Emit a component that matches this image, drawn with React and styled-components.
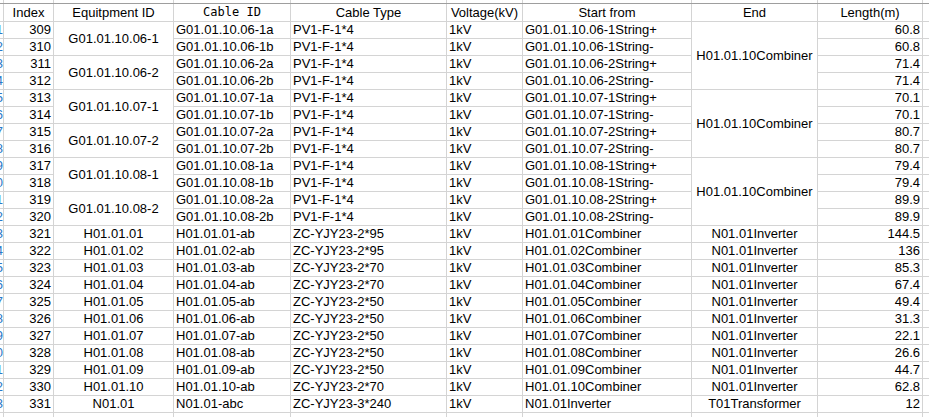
import React from 'react';
import styled, { createGlobalStyle } from 'styled-components';

const GlobalStyle = createGlobalStyle`
  html, body {
    margin: 0;
    padding: 0;
    background: #ffffff;
    overflow: hidden;
  }
  body {
    font-family: "Liberation Sans", Arial, sans-serif;
  }
`;

const columns = '3px 49px 119px 116px 155px 75px 168px 125px 104px 1fr';

const colors = {
  line: '#d4d4d4',
  frozen: '#9e9e9e',
  text: '#000000',
  rowNumber: '#2a78c8'
};

const Page = styled.div`
  width: 929px;
  height: 417px;
  overflow: hidden;
  background: #ffffff;
`;

const TopStrip = styled.div`
  display: grid;
  grid-template-columns: ${ columns };
  grid-template-rows: 3px;
  column-gap: 1px;
  background: ${ colors.line };
`;

const Divider = styled.div`
  height: 1px;
  background: ${ colors.frozen };
`;

const Sheet = styled.div`
  display: grid;
  grid-template-columns: ${ columns };
  grid-template-rows: 17px;
  grid-auto-rows: 16px;
  gap: 1px;
  background: ${ colors.line };
`;

const Blank = styled.div`
  background: #ffffff;
`;

const RowNumber = styled.div`
  display: flex;
  justify-content: flex-end;
  align-items: center;
  overflow: hidden;
  background: #ffffff;
  color: ${ colors.rowNumber };
  font-size: 13px;
  line-height: 16px;
  white-space: nowrap;
`;

const HeaderCell = styled.div`
  display: flex;
  align-items: center;
  justify-content: center;
  background: #ffffff;
  color: ${ colors.text };
  font-family: ${ props => props.$mono ? '"DejaVu Sans Mono", "Liberation Mono", monospace' : '"Liberation Sans", Arial, sans-serif' };
  font-size: ${ props => props.$mono ? '12px' : '13px' };
  line-height: 17px;
  white-space: nowrap;
  overflow: hidden;
`;

const justify = { left: 'flex-start', center: 'center', right: 'flex-end' };

const Cell = styled.div`
  display: flex;
  align-items: center;
  justify-content: ${ props => justify[ props.$align || 'left' ] };
  grid-row: ${ props => props.$span ? `span ${ props.$span }` : 'auto' };
  padding: 0 2px;
  background: #ffffff;
  color: ${ colors.text };
  font-size: 13px;
  line-height: 16px;
  white-space: nowrap;
  overflow: hidden;
`;

const headers = [
  { label: 'Index' },
  { label: 'Equitpment ID' },
  { label: 'Cable ID', mono: true },
  { label: 'Cable Type' },
  { label: 'Voltage(kV)' },
  { label: 'Start from' },
  { label: 'End' },
  { label: 'Length(m)' }
];

const stringRows = [
  [ '06', '1', 60.8 ],
  [ '06', '2', 71.4 ],
  [ '07', '1', 70.1 ],
  [ '07', '2', 80.7 ],
  [ '08', '1', 79.4 ],
  [ '08', '2', 89.9 ]
];

const rows = [];

stringRows.forEach(([ group, part, length ], i) => {
  [ 'a', 'b' ].forEach((side, j) => {
    rows.push({
      index: 309 + i * 2 + j,
      equipment: j === 0 ? { text: `G01.01.10.${ group }-${ part }`, span: 2 } : null,
      cableId: `G01.01.10.${ group }-${ part }${ side }`,
      type: 'PV1-F-1*4',
      voltage: '1kV',
      start: `G01.01.10.${ group }-${ part }String${ side === 'a' ? '+' : '-' }`,
      end: i % 2 === 0 && j === 0 ? { text: 'H01.01.10Combiner', span: 4 } : null,
      length: length
    });
  });
});

const combiners = [
  [ '2*95', '144.5' ],
  [ '2*95', '136' ],
  [ '2*70', '85.3' ],
  [ '2*70', '67.4' ],
  [ '2*50', '49.4' ],
  [ '2*50', '31.3' ],
  [ '2*50', '22.1' ],
  [ '2*50', '26.6' ],
  [ '2*50', '44.7' ],
  [ '2*70', '62.8' ]
];

combiners.forEach(([ size, length ], i) => {
  const id = `H01.01.${ String(i + 1).padStart(2, '0') }`;
  rows.push({
    index: 321 + i,
    equipment: { text: id, span: 1 },
    cableId: `${ id }-ab`,
    type: `ZC-YJY23-${ size }`,
    voltage: '1kV',
    start: `${ id }Combiner`,
    end: { text: 'N01.01Inverter', span: 1 },
    length
  });
});

rows.push({
  index: 331,
  equipment: { text: 'N01.01', span: 1 },
  cableId: 'N01.01-abc',
  type: 'ZC-YJY23-3*240',
  voltage: '1kV',
  start: 'N01.01Inverter',
  end: { text: 'T01Transformer', span: 1 },
  length: '12'
});

const App = () => (
  <Page>
    <GlobalStyle />
    <TopStrip>
      { Array.from({ length: 10 }).map((_, i) => <Blank key = { i } />) }
    </TopStrip>
    <Divider />
    <Sheet>
      <Blank />
      { headers.map(h => (
        <HeaderCell key = { h.label } $mono = { h.mono }>{ h.label }</HeaderCell>
      )) }
      <Blank />

      { rows.map(row => (
        <React.Fragment key = { row.index }>
          <RowNumber>{ row.index + 2 }</RowNumber>
          <Cell $align = "right">{ row.index }</Cell>
          { row.equipment && (
            <Cell $align = "center" $span = { row.equipment.span }>{ row.equipment.text }</Cell>
          ) }
          <Cell>{ row.cableId }</Cell>
          <Cell>{ row.type }</Cell>
          <Cell>{ row.voltage }</Cell>
          <Cell>{ row.start }</Cell>
          { row.end && (
            <Cell $align = "center" $span = { row.end.span }>{ row.end.text }</Cell>
          ) }
          <Cell $align = "right">{ row.length }</Cell>
          <Blank />
        </React.Fragment>
      )) }

      { Array.from({ length: 10 }).map((_, i) => <Blank key = { `tail-${ i }` } />) }
    </Sheet>
  </Page>
);

export default App;
